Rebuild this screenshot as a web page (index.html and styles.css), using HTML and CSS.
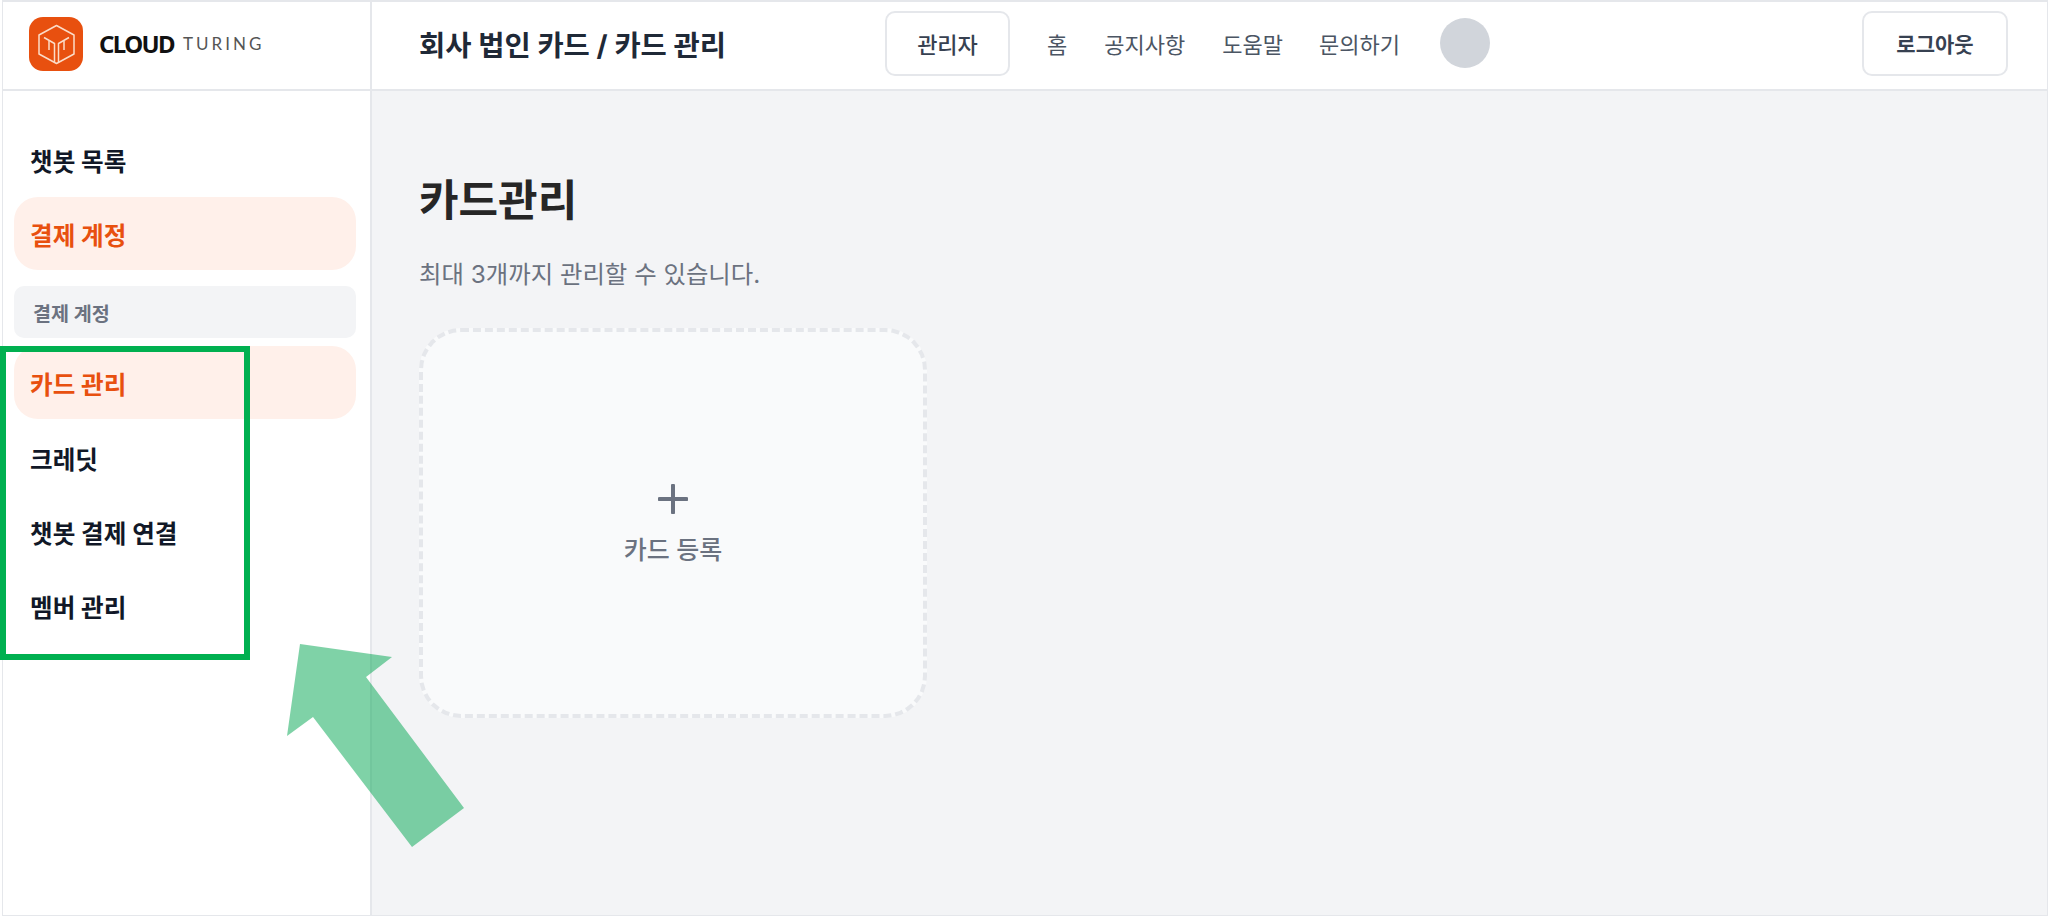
FILE: index.html
```html
<!DOCTYPE html>
<html lang="ko">
<head>
    <meta charset="UTF-8">
    <meta name="viewport" content="width=device-width, initial-scale=1.0">
    <title>카드관리</title>
    <link rel="stylesheet" href="styles.css">
</head>
<body>

    <div class="app">
        <!-- Top bar -->
        <header class="topbar">
            <div class="brand">
                <svg class="brand-icon" viewBox="0 0 54 54" width="54" height="54">
                    <rect width="54" height="54" rx="14" fill="#e8500f"/>
                    <g fill="none" stroke="#fbdcc8" stroke-width="1.5" stroke-linejoin="round">
                        <path d="M27.5 8.5 45 18V37L27.5 46.5 10 37V18Z"/>
                        <path d="M15 20.5 25.5 26.5V45M40 20.5 29.5 26.5V45"/>
                        <path d="M20 24V33M35 24V33"/>
                    </g>
                </svg>
                <span class="brand-cloud">CLOUD</span>
                <span class="brand-turing">TURING</span>
            </div>
            <div class="topbar-main">
                <div class="page-path">회사 법인 카드 / 카드 관리</div>
                <nav class="topnav">
                    <button class="btn btn-admin">관리자</button>
                    <a class="nav-link">홈</a>
                    <a class="nav-link">공지사항</a>
                    <a class="nav-link">도움말</a>
                    <a class="nav-link">문의하기</a>
                    <span class="avatar"></span>
                </nav>
                <button class="btn btn-logout">로그아웃</button>
            </div>
        </header>

        <div class="body-row">
            <!-- Sidebar -->
            <aside class="sidebar">
                <a class="menu-item">챗봇 목록</a>
                <a class="menu-item active">결제 계정</a>
                <div class="menu-label">결제 계정</div>
                <a class="menu-item active">카드 관리</a>
                <a class="menu-item">크레딧</a>
                <a class="menu-item">챗봇 결제 연결</a>
                <a class="menu-item">멤버 관리</a>
            </aside>

            <!-- Content -->
            <main class="content">
                <h1>카드관리</h1>
                <p class="subtitle">최대 3개까지 관리할 수 있습니다.</p>
                <div class="add-card">
                    <svg viewBox="0 0 30 30" width="30" height="30">
                        <path d="M15 1.5V28.5M1.5 15H28.5" stroke="#6b7280" stroke-width="4" stroke-linecap="round"/>
                    </svg>
                    <span>카드 등록</span>
                </div>
            </main>
        </div>
    </div>

    <!-- Annotation -->
    <div class="mark-box"></div>
    <svg class="mark-arrow" viewBox="0 0 2048 916" width="2048" height="916">
        <polygon points="300,644 392,657 366,677 464,808 412,847 313,717 287,736" fill="#00a650" fill-opacity="0.5"/>
    </svg>

</body>
</html>
```

FILE: styles.css
```css
* {
    box-sizing: border-box;
}

body {
    margin: 0;
    padding-left: 2px;
    height: 916px;
    overflow: hidden;
    background: #ffffff;
    font-family: Inter, "Noto Sans CJK KR", sans-serif;
    color: #111827;
}

.app {
    height: 916px;
    border: 1px solid #e5e7eb;
    border-top-width: 2px;
    display: flex;
    flex-direction: column;
}

/* Top bar */
.topbar {
    height: 89px;
    flex: none;
    display: flex;
    border-bottom: 2px solid #e5e7eb;
    background: #ffffff;
}

.brand {
    width: 369px;
    flex: none;
    display: flex;
    align-items: center;
    padding: 0 0 4px 26px;
    border-right: 2px solid #e5e7eb;
}

.brand-icon {
    margin-right: 16px;
}

.brand-cloud {
    font-family: "Noto Sans", sans-serif;
    font-size: 24px;
    font-weight: 700;
    color: #111111;
    letter-spacing: -1.6px;
    margin-right: 9px;
}

.brand-turing {
    font-family: Lato, sans-serif;
    font-size: 17px;
    color: #555555;
    letter-spacing: 3px;
}

.topbar-main {
    flex: 1;
    display: flex;
    align-items: center;
    padding: 0 39px 5px 47px;
}

.page-path {
    width: 466px;
    font-size: 28.5px;
    font-weight: 700;
    color: #1f2937;
}

.topnav {
    display: flex;
    align-items: center;
    flex: 1;
}

.btn {
    height: 65px;
    border: 2px solid #e5e7eb;
    border-radius: 10px;
    background: #ffffff;
    font-family: inherit;
    font-size: 21px;
    font-weight: 500;
    color: #374151;
}

.btn-admin {
    width: 125px;
    margin-right: 37px;
    font-size: 22px;
}

.btn-logout {
    width: 146px;
    font-weight: 700;
}

.nav-link {
    font-size: 22px;
    color: #4b5563;
    margin-right: 37px;
}

.nav-link:nth-of-type(3) {
    margin-right: 36px;
}

.avatar {
    width: 50px;
    height: 50px;
    border-radius: 50%;
    background: #d1d5db;
    margin-left: 3px;
}

/* Sidebar */
.body-row {
    flex: 1;
    display: flex;
    min-height: 0;
}

.sidebar {
    width: 369px;
    flex: none;
    padding: 32px 14px 0 11px;
    border-right: 2px solid #e5e7eb;
    background: #ffffff;
}

.menu-item {
    display: flex;
    align-items: center;
    height: 74px;
    padding-left: 16px;
    font-size: 24.6px;
    font-weight: 700;
    color: #111827;
}

.menu-item.active {
    height: 73px;
    margin-bottom: 2px;
    border-radius: 24px;
    background: #fff0ea;
    color: #e8500f;
}

.menu-label {
    display: flex;
    align-items: center;
    height: 52px;
    margin: 16px 0 8px;
    padding-left: 19px;
    border-radius: 10px;
    background: #f3f4f6;
    font-size: 19.6px;
    font-weight: 700;
    color: #6b7280;
}

/* Content */
.content {
    flex: 1;
    padding: 85px 0 0 47px;
    background: #f3f4f6;
}

h1 {
    margin: 0 0 34px;
    font-size: 43px;
    line-height: 48px;
    font-weight: 700;
    color: #262626;
}

.subtitle {
    margin: 0 0 38px;
    font-size: 24.4px;
    line-height: 32px;
    color: #6b7280;
}

.add-card {
    width: 508px;
    height: 390px;
    border: 4px dashed #e5e7eb;
    border-radius: 42px;
    background: #f9fafb;
    display: flex;
    flex-direction: column;
    align-items: center;
    padding-top: 152px;
}

.add-card span {
    margin-top: 20px;
    font-size: 25px;
    font-weight: 500;
    line-height: 32px;
    color: #6b7280;
}

/* Annotation */
.mark-box {
    position: absolute;
    left: 0;
    top: 346px;
    width: 250px;
    height: 314px;
    border: 6px solid #00b050;
}

.mark-arrow {
    position: absolute;
    left: 0;
    top: 0;
}
```
